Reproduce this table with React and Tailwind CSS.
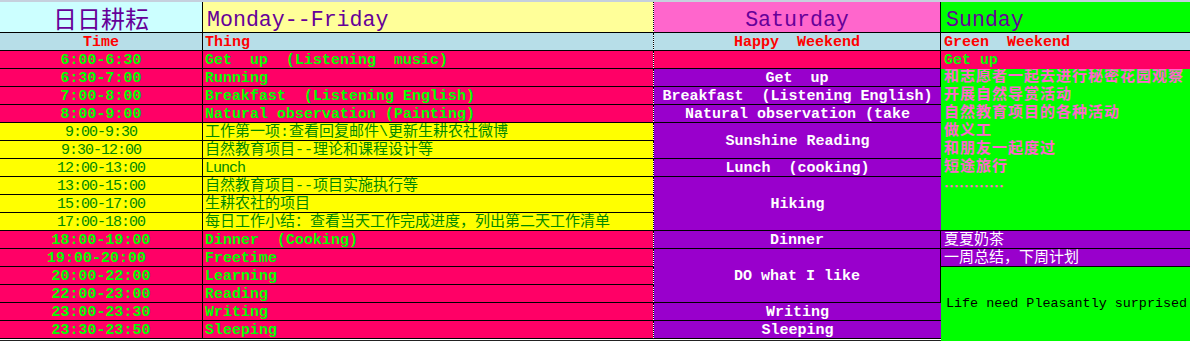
import React from "react";

const PINK = "bg-[#ff0066]";
const YEL = "bg-[#ffff00]";
const PUR = "bg-[#9900cc]";

const rows = [
  { t: "6:00-6:30", thing: "Get  up  (Listening  music)", pink: true },
  { t: "6:30-7:00", thing: "Running", pink: true },
  { t: "7:00-8:00", thing: "Breakfast  (Listening English)", pink: true },
  { t: "8:00-9:00", thing: "Natural observation (Painting)", pink: true },
  { t: "9:00-9:30", thing: "工作第一项:查看回复邮件\\更新生耕农社微博", pink: false },
  { t: "9:30-12:00", thing: "自然教育项目--理论和课程设计等", pink: false },
  { t: "12:00-13:00", thing: "Lunch", pink: false, latin: true },
  { t: "13:00-15:00", thing: "自然教育项目--项目实施执行等", pink: false },
  { t: "15:00-17:00", thing: "生耕农社的项目", pink: false },
  { t: "17:00-18:00", thing: "每日工作小结：查看当天工作完成进度，列出第二天工作清单", pink: false },
  { t: "18:00-19:00", thing: "Dinner  (Cooking)", pink: true },
  { t: "19:00-20:00 ", thing: "Freetime", pink: true },
  { t: "20:00-22:00", thing: "Learning", pink: true },
  { t: "22:00-23:00", thing: "Reading", pink: true },
  { t: "23:00-23:30", thing: "Writing", pink: true },
  { t: "23:30-23:50", thing: "Sleeping", pink: true },
];

const cellA =
  "flex items-center justify-center pt-[1px] border-r border-b border-black whitespace-pre overflow-hidden text-[15px] leading-none";
const cellB =
  "flex items-center pl-[2px] pt-[1px] border-r border-b border-black [border-right-style:dotted] bg-clip-padding whitespace-pre overflow-hidden text-[15px] leading-none";
const cellC =
  "flex items-center justify-center pt-[1px] border-b border-black whitespace-pre overflow-hidden text-[15px] leading-none font-bold";

function A({ r }) {
  return (
    <div
      className={`${cellA} ${r.pink ? `${PINK} font-bold text-[#00ff00]` : `${YEL} text-[#008800] tracking-[-1px]`}`}
    >
      {r.t}
    </div>
  );
}

function B({ r }) {
  return (
    <div
      className={`${cellB} ${r.pink ? `${PINK} font-bold text-[#00ff00]` : `${YEL} text-[#008800]`} ${r.latin ? "tracking-[-1px]" : ""}`}
    >
      {r.thing}
    </div>
  );
}

function Pair({ i }) {
  return (
    <>
      <A r={rows[i]} />
      <B r={rows[i]} />
    </>
  );
}

const sundayLines = [
  "和志愿者一起去进行秘密花园观察",
  "开展自然导赏活动",
  "自然教育项目的各种活动",
  "做义工",
  "和朋友一起度过",
  "短途旅行",
];

export default function App() {
  return (
    <div className="w-[1190px] h-[342px] overflow-hidden bg-white font-[family-name:'Liberation_Mono','Noto_Sans_CJK_SC',monospace]">
      <div className="h-[2px] bg-[#c6d0dd]" />
      <div className="grid grid-cols-[203px_451px_287px_249px] grid-rows-[31px_repeat(17,18px)] bg-white">
        {/* header */}
        <div className="flex items-end justify-center pb-[2px] border-r border-b border-black bg-[#ccffff] text-[24px] leading-none text-[#660099] font-['Noto_Sans_CJK_SC',sans-serif]">
          日日耕耘
        </div>
        <div className="flex items-end pl-[4px] border-r border-b border-black [border-right-style:dotted] bg-clip-padding bg-[#ffff99] text-[21.6px] leading-none text-[#660099]">
          Monday--Friday
        </div>
        <div className="flex items-end justify-center border-r border-b border-black bg-[#ff66cc] text-[21.6px] leading-none text-[#660099]">
          Saturday
        </div>
        <div className="flex items-end pl-[5px] border-b border-black bg-[#00ff00] text-[21.6px] leading-none text-[#660099]">
          Sunday
        </div>

        {/* sub header */}
        <div className={`${cellA} bg-[#b7dee8] font-bold text-[#ff0000]`}>Time</div>
        <div className={`${cellB} bg-[#b7dee8] font-bold text-[#ff0000]`}>Thing</div>
        <div className={`${cellC} border-r bg-[#b7dee8] text-[#ff0000]`}>Happy  Weekend</div>
        <div className="flex items-center pl-[3px] pt-[1px] border-b border-black bg-[#b7dee8] font-bold text-[15px] leading-none text-[#ff0000] whitespace-pre">
          Green  Weekend
        </div>

        {/* data 1 */}
        <Pair i={0} />
        <div className={`${cellC} border-r ${PINK}`} />
        <div className={`flex items-center pl-[3px] pt-[1px] ${PINK} font-bold text-[15px] leading-none text-[#00ff00] whitespace-pre`}>
          Get up
        </div>

        {/* data 2 */}
        <Pair i={1} />
        <div className={`${cellC} border-r ${PUR} text-white`}>Get  up</div>
        <div className="row-span-9 flex flex-col pl-[3px] bg-[#00ff00] border-b border-black text-[15px] leading-[18px] font-bold tracking-[1px] text-[#ff66cc] overflow-hidden">
          {sundayLines.map((l) => (
            <div key={l} className="h-[18px] whitespace-pre">
              {l}
            </div>
          ))}
          <div className="h-[18px] font-['Noto_Sans_CJK_SC',sans-serif] tracking-normal">…………</div>
        </div>

        {/* data 3 */}
        <Pair i={2} />
        <div className={`${cellC} ${PUR} text-white`}>Breakfast  (Listening English)</div>

        {/* data 4 */}
        <Pair i={3} />
        <div className={`${cellC} ${PUR} text-white`}>Natural observation (take</div>

        {/* data 5-6 */}
        <Pair i={4} />
        <div className={`${cellC} row-span-2 ${PUR} text-white`}>Sunshine Reading</div>
        <Pair i={5} />

        {/* data 7 */}
        <Pair i={6} />
        <div className={`${cellC} ${PUR} text-white`}>Lunch  (cooking)</div>

        {/* data 8-10 */}
        <Pair i={7} />
        <div className={`${cellC} row-span-3 ${PUR} text-white`}>Hiking</div>
        <Pair i={8} />
        <Pair i={9} />

        {/* data 11 */}
        <Pair i={10} />
        <div className={`${cellC} border-r ${PUR} text-white`}>Dinner</div>
        <div className={`flex items-center pl-[3px] pt-[1px] border-b border-black ${PUR} text-[15px] leading-none text-white whitespace-pre`}>
          夏夏奶茶
        </div>

        {/* data 12-14 */}
        <Pair i={11} />
        <div className={`${cellC} row-span-3 border-r ${PUR} text-white`}>DO what I like</div>
        <div className={`flex items-center pl-[3px] pt-[1px] border-b border-black ${PUR} text-[15px] leading-none text-white whitespace-pre`}>
          一周总结，下周计划
        </div>
        <Pair i={12} />
        <div className="row-span-4 flex items-center pl-[5px] pt-[2px] bg-[#00ff00] text-[13.4px] leading-none text-black whitespace-pre">
          Life need Pleasantly surprised
        </div>
        <Pair i={13} />

        {/* data 15-16 */}
        <Pair i={14} />
        <div className={`${cellC} ${PUR} text-white`}>Writing</div>
        <Pair i={15} />
        <div className={`${cellC} ${PUR} text-white`}>Sleeping</div>
      </div>
      <div className="flex h-[3px]">
        <div className="w-[941px] flex flex-col">
          <div className="h-px bg-white" />
          <div className="h-px bg-[#222]" />
          <div className="h-px bg-white" />
        </div>
        <div className="w-[249px] flex flex-col">
          <div className="h-[2px] bg-[#00ff00]" />
          <div className="h-px bg-white" />
        </div>
      </div>
    </div>
  );
}
